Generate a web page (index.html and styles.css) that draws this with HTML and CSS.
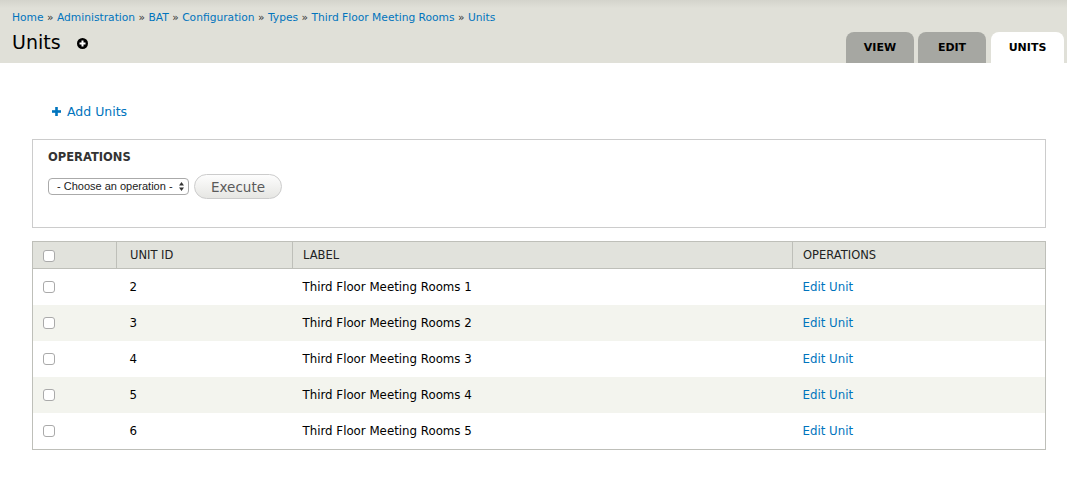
FILE: index.html
```html
<!DOCTYPE html>
<html>
<head>
<meta charset="utf-8">
<link rel="stylesheet" href="styles.css">
</head>
<body>
<div class="header">
  <nav class="breadcrumb">
    <a href="#">Home</a> » <a href="#">Administration</a> » <a href="#">BAT</a> » <a href="#">Configuration</a> » <a href="#">Types</a> » <a href="#">Third Floor Meeting Rooms</a> » <a href="#">Units</a>
  </nav>
  <div class="title-row">
    <h1 class="page-title">Units <span class="shortcut"><svg width="11" height="11" viewBox="0 0 11 11"><circle cx="5.5" cy="5.5" r="5.5" fill="#000"/><rect x="4.5" y="2.5" width="2" height="6" fill="#fff"/><rect x="2.5" y="4.5" width="6" height="2" fill="#fff"/></svg></span></h1>
    <ul class="tabs">
      <li class="tab"><a href="#">VIEW</a></li>
      <li class="tab"><a href="#">EDIT</a></li>
      <li class="tab active"><a href="#">UNITS</a></li>
    </ul>
  </div>
</div>
<div class="content">
  <ul class="action-links">
    <li><a href="#"><svg class="add-icon" width="9" height="9" viewBox="0 0 9 9"><rect x="3.2" y="0" width="2.6" height="9" fill="#0074bd"/><rect x="0" y="3.2" width="9" height="2.6" fill="#0074bd"/></svg>Add Units</a></li>
  </ul>
  <fieldset class="ops">
    <legend class="ops-legend">OPERATIONS</legend>
    <div class="ops-row">
      <div class="select">- Choose an operation - <span class="arrows"><svg width="5" height="9" viewBox="0 0 5 9"><path d="M0 3.5 L2.5 0 L5 3.5Z M0 5.5 L2.5 9 L5 5.5Z" fill="#333"/></svg></span></div>
      <button class="btn">Execute</button>
    </div>
  </fieldset>
  <table class="units">
    <thead>
      <tr><th class="c-check"><span class="cb"></span></th><th class="c-id">UNIT ID</th><th class="c-label">LABEL</th><th class="c-ops">OPERATIONS</th></tr>
    </thead>
    <tbody>
      <tr><td><span class="cb"></span></td><td class="id">2</td><td>Third Floor Meeting Rooms 1</td><td><a href="#">Edit Unit</a></td></tr>
      <tr><td><span class="cb"></span></td><td class="id">3</td><td>Third Floor Meeting Rooms 2</td><td><a href="#">Edit Unit</a></td></tr>
      <tr><td><span class="cb"></span></td><td class="id">4</td><td>Third Floor Meeting Rooms 3</td><td><a href="#">Edit Unit</a></td></tr>
      <tr><td><span class="cb"></span></td><td class="id">5</td><td>Third Floor Meeting Rooms 4</td><td><a href="#">Edit Unit</a></td></tr>
      <tr><td><span class="cb"></span></td><td class="id">6</td><td>Third Floor Meeting Rooms 5</td><td><a href="#">Edit Unit</a></td></tr>
    </tbody>
  </table>
</div>
</body>
</html>
```
FILE: styles.css
```css
* { box-sizing: border-box; }
body {
  margin: 0;
  font-family: "DejaVu Sans", "Liberation Sans", sans-serif;
  font-size: 12px;
  color: #000;
  background: #fff;
}
a { color: #0074bd; text-decoration: none; }

.header {
  background: linear-gradient(to bottom, #d4d4cc 0px, #e0e0d8 8px, #e0e0d8 100%);
  height: 63px;
  padding: 11px 0 0 12px;
  display: flex;
  flex-direction: column;
}
.breadcrumb {
  font-size: 10.7px;
  line-height: 14px;
  color: #333;
}
.title-row {
  display: flex;
  justify-content: space-between;
  align-items: flex-end;
  flex: 1;
}
.page-title {
  margin: 0 0 9px 0;
  font-size: 19px;
  font-weight: normal;
  line-height: 24px;
  display: flex;
  align-items: center;
}
.shortcut { display: inline-flex; margin-left: 16px; margin-top: 3px; }

.tabs {
  list-style: none;
  margin: 0 3px 0 0;
  padding: 0;
  display: flex;
  gap: 4px;
}
.tab a {
  display: block;
  height: 31px;
  line-height: 32px;
  padding: 0 16px;
  min-width: 68px;
  text-align: center;
  background: #a6a7a2;
  color: #000;
  font-size: 11px;
  font-weight: bold;
  border-radius: 8px 8px 0 0;
}
.tab.active a { background: #fff; min-width: 73px; margin-left: 1px; }

.content { padding: 0 21px 0 32px; }

.action-links {
  list-style: none;
  margin: 0;
  padding: 41px 0 0 20px;
  height: 76px;
}
.action-links a { font-size: 12.5px; display: inline-flex; align-items: center; }
.add-icon { margin-right: 6px; }

.ops {
  margin: 0;
  border: 1px solid #ccc;
  padding: 10px 15px 27px 15px;
  position: relative;
  height: 89px;
}
.ops-legend {
  float: left;
  width: 100%;
  padding: 0;
  font-size: 11.5px;
  font-weight: bold;
  color: #333;
  line-height: 14px;
  margin-bottom: 10px;
}
.ops-row {
  clear: both;
  display: flex;
  align-items: center;
  gap: 5px;
}
.select {
  width: 141px;
  height: 17px;
  border: 1px solid #aaa;
  border-radius: 4px;
  font-family: "Liberation Sans", sans-serif;
  font-size: 11px;
  line-height: 15px;
  padding-left: 8px;
  color: #222;
  background: #fff;
  display: flex;
  align-items: center;
  justify-content: space-between;
  padding-right: 4px;
}
.arrows { display: inline-flex; }
.btn {
  width: 88px;
  height: 25px;
  border: 1px solid #ccc;
  border-radius: 13px;
  background: linear-gradient(to bottom, #fdfdfd, #e6e6e3);
  color: #5a5a5a;
  font-family: "DejaVu Sans", sans-serif;
  font-size: 13.5px;
  padding: 0;
}

.units {
  margin-top: 13px;
  width: 100%;
  border-collapse: collapse;
  border: 1px solid #bebfb9;
}
.units th {
  background: #e1e2dc;
  font-weight: normal;
  text-align: left;
  height: 27px;
  padding: 0 10px;
  font-size: 11.5px;
  color: #222;
  border-bottom: 1px solid #bebfb9;
  border-left: 1px solid #bebfb9;
}
.units th:first-child { border-left: none; }
.units th.c-id, .units td.id { padding-left: 13px; }
.units td {
  height: 36px;
  padding: 0 10px;
  font-size: 11.8px;
}
.units tbody tr:last-child td { height: 37px; }
.units tbody tr:nth-child(even) td { background: #f3f4ee; }
.c-check { width: 84px; }
.c-id { width: 176px; }
.c-label { width: 500px; }
.cb {
  display: inline-block;
  width: 12px;
  height: 12px;
  border: 1px solid #aaa;
  border-radius: 3px;
  background: #fff;
  vertical-align: middle;
}
```
